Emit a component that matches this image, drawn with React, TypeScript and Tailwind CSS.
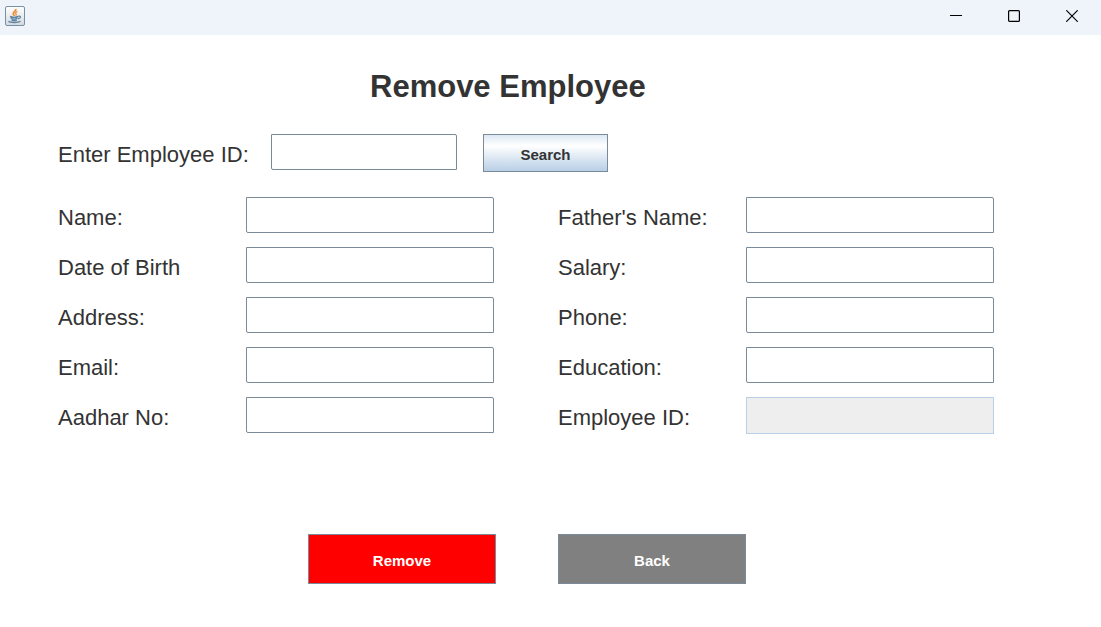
const left = ["Name:", "Date of Birth", "Address:", "Email:", "Aadhar No:"];
const right = ["Father's Name:", "Salary:", "Phone:", "Education:", "Employee ID:"];

const label = "shrink-0 pt-[3px] text-[22px] leading-9 whitespace-nowrap";
const field =
  "h-9 min-w-0 rounded-tr-[2px] rounded-bl-[2px] border border-[#7a8a99] bg-white px-2 text-[22px] outline-none disabled:h-[37px] disabled:rounded-none disabled:border-[#b8cfe5] disabled:bg-[#eeeeee]";
const windowButton = "flex h-8 w-[58px] items-center justify-center";
const action = "h-[50px] w-[188px] border border-[#7a8a99] pt-1 text-[15px] font-bold text-white";

function Column({ labels, prefix }: { labels: string[]; prefix: string }) {
  return (
    <div className="flex flex-col gap-[14px]">
      {labels.map((text, i) => (
        <div key={text} className="flex h-9 items-start">
          <label htmlFor={prefix + i} className={`${label} w-[188px]`}>
            {text}
          </label>
          <input id={prefix + i} className={`${field} flex-1`} disabled={text === "Employee ID:"} />
        </div>
      ))}
    </div>
  );
}

function JavaIcon() {
  return (
    <svg width="20" height="20" viewBox="0 0 20 20" fill="none" aria-hidden="true">
      <defs>
        <linearGradient id="cup-tile" x1="0" y1="0" x2="0" y2="1">
          <stop offset="0" stopColor="#ffffff" />
          <stop offset="1" stopColor="#d5d8dc" />
        </linearGradient>
      </defs>
      <rect x="0.5" y="0.5" width="19" height="19" rx="1.5" fill="url(#cup-tile)" stroke="#7390a8" />
      <path d="M10.7 3c1 2-3.4 3.3-2.4 5.2.3.6.9 1 1.2 1.5" stroke="#e98a35" strokeWidth="1.8" />
      <path d="M12.4 5.4c-1.6.6-2.4 1.5-1.4 2.5.5.6.2 1.2-.4 1.7" stroke="#ee9c50" strokeWidth="1.5" />
      <path d="M5 10.5c2 .9 6 .9 8.5 0M5.8 12.4c1.9.8 4.8.8 6.7 0M6.6 14.1c1.5.6 3.7.6 5.2 0" stroke="#5f84a3" strokeWidth="1.4" />
      <path d="M13.3 10.3c3-.7 3 1.9-.3 2.7" stroke="#5f84a3" strokeWidth="1.2" />
      <path d="M3.5 15.2c1.8 1.7 9.7 1.7 12 0" stroke="#5f84a3" strokeWidth="1.3" />
    </svg>
  );
}

export default function App() {
  return (
    <div className="min-h-screen bg-white font-['Liberation_Sans',sans-serif] text-[#333333]">
      <header className="flex h-[35px] items-start justify-between bg-[#eef4f9] pl-[5px] text-black">
        <div className="pt-[6px]">
          <JavaIcon />
        </div>
        <div className="flex">
          <button type="button" aria-label="Minimize" className={windowButton}>
            <svg width="12" height="12" viewBox="0 0 12 12">
              <path d="M0 5.5h12" stroke="currentColor" />
            </svg>
          </button>
          <button type="button" aria-label="Maximize" className={windowButton}>
            <svg width="12" height="12" viewBox="0 0 12 12">
              <rect x="0.6" y="0.6" width="10.8" height="10.8" rx="1" fill="none" stroke="currentColor" strokeWidth="1.2" />
            </svg>
          </button>
          <button type="button" aria-label="Close" className={windowButton}>
            <svg width="12" height="12" viewBox="0 0 12 12">
              <path d="M0.3 0.3l11.4 11.4M11.7 0.3L0.3 11.7" stroke="currentColor" strokeWidth="1.2" />
            </svg>
          </button>
        </div>
      </header>
      <main className="pt-8 pr-[106px] pb-8 pl-[58px]">
        <h1 className="pl-[312px] text-[31px] leading-10 font-bold">Remove Employee</h1>
        <form className="pt-[27px]" onSubmit={(e) => e.preventDefault()}>
          <div className="flex items-start">
            <label htmlFor="search" className={`${label} w-[213px]`}>
              Enter Employee ID:
            </label>
            <input id="search" className={`${field} w-[186px]`} />
            <button
              type="submit"
              className="ml-[26px] h-[38px] w-[125px] border border-[#7a8a99] bg-linear-to-b from-[#dde8f3] via-white via-30% to-[#b8cfe5] pt-1 text-[15px] font-bold"
            >
              Search
            </button>
          </div>
          <div className="grid grid-cols-2 gap-16 pt-6 pr-px">
            <Column labels={left} prefix="left" />
            <Column labels={right} prefix="right" />
          </div>
          <div className="flex justify-center gap-[62px] pt-[101px] pl-px">
            <button type="button" className={`${action} bg-[#ff0000]`}>
              Remove
            </button>
            <button type="button" className={`${action} bg-[#808080]`}>
              Back
            </button>
          </div>
        </form>
      </main>
    </div>
  );
}
